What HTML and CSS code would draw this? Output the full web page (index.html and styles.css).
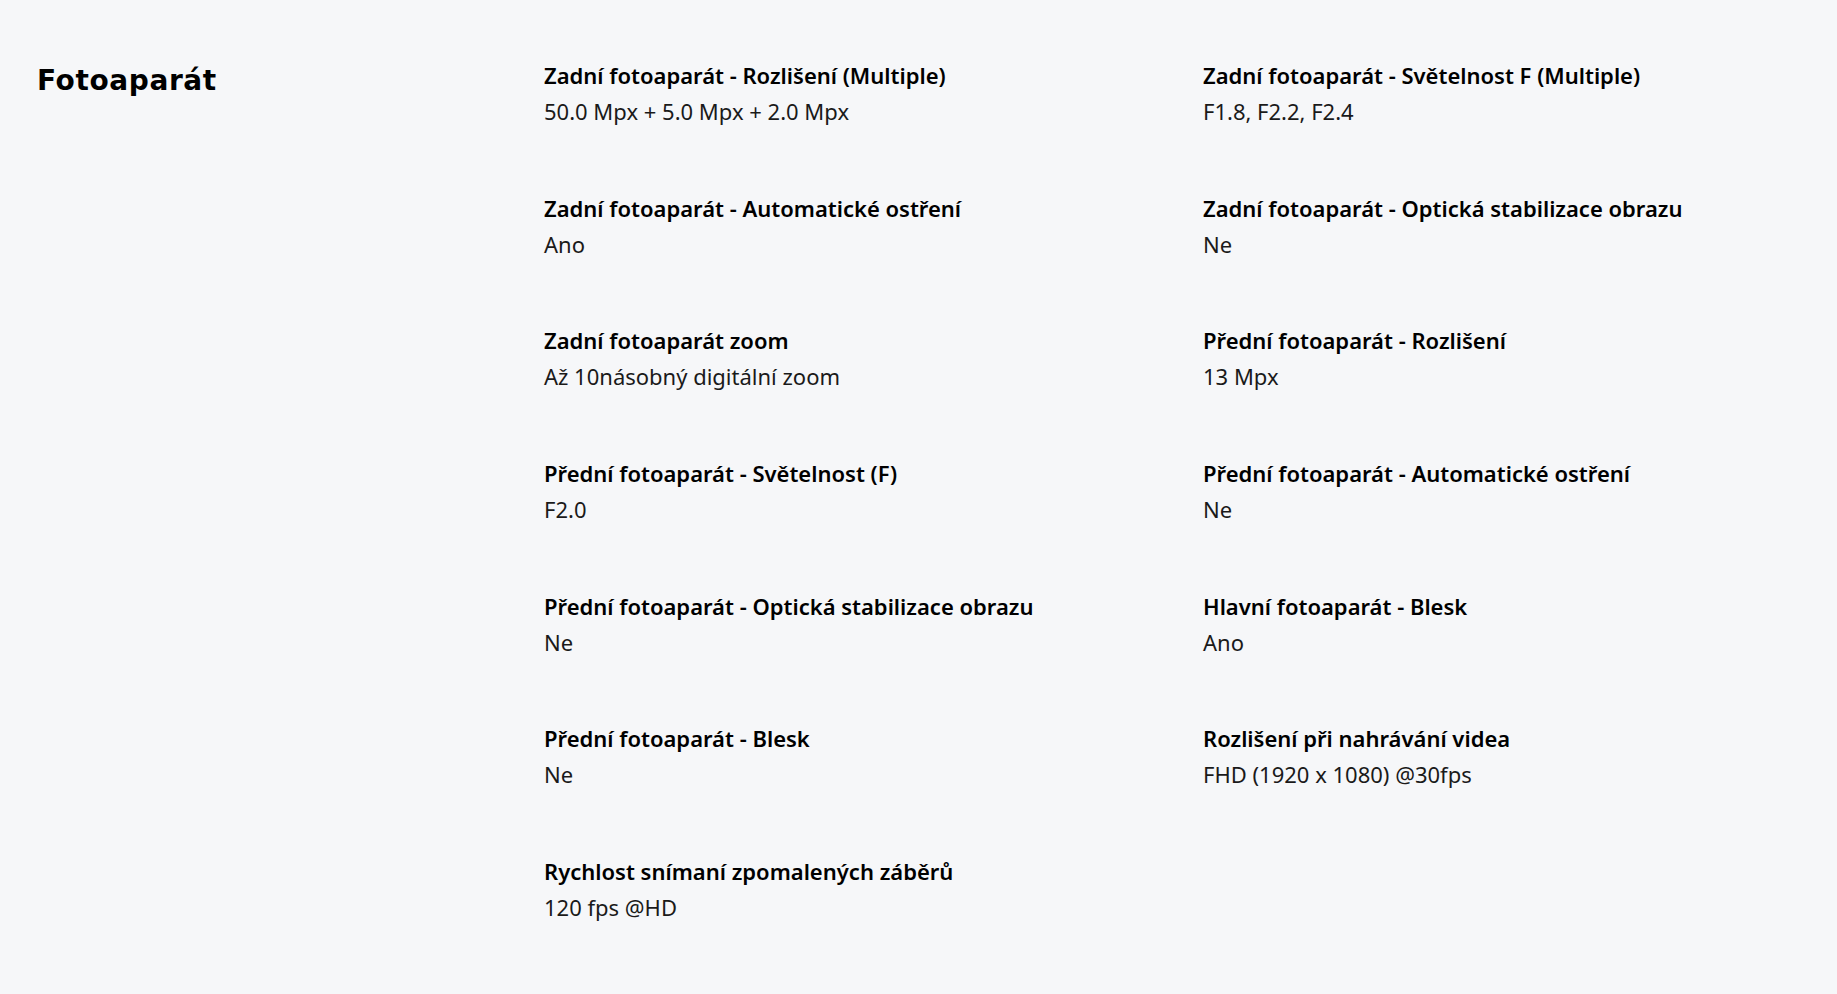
FILE: index.html
```html
<!DOCTYPE html>
<html lang="cs">
<head>
<meta charset="utf-8">
<title>Fotoaparát</title>
<link rel="stylesheet" href="styles.css">
</head>
<body>
<section class="spec">
  <h2 class="spec-title">Fotoaparát</h2>
  <div class="spec-grid">
    <div class="item"><div class="label">Zadní fotoaparát - Rozlišení (Multiple)</div><div class="value">50.0 Mpx + 5.0 Mpx + 2.0 Mpx</div></div>
    <div class="item"><div class="label">Zadní fotoaparát - Světelnost F (Multiple)</div><div class="value">F1.8, F2.2, F2.4</div></div>
    <div class="item"><div class="label">Zadní fotoaparát - Automatické ostření</div><div class="value">Ano</div></div>
    <div class="item"><div class="label">Zadní fotoaparát - Optická stabilizace obrazu</div><div class="value">Ne</div></div>
    <div class="item"><div class="label">Zadní fotoaparát zoom</div><div class="value">Až 10násobný digitální zoom</div></div>
    <div class="item"><div class="label">Přední fotoaparát - Rozlišení</div><div class="value">13 Mpx</div></div>
    <div class="item"><div class="label">Přední fotoaparát - Světelnost (F)</div><div class="value">F2.0</div></div>
    <div class="item"><div class="label">Přední fotoaparát - Automatické ostření</div><div class="value">Ne</div></div>
    <div class="item"><div class="label">Přední fotoaparát - Optická stabilizace obrazu</div><div class="value">Ne</div></div>
    <div class="item"><div class="label">Hlavní fotoaparát - Blesk</div><div class="value">Ano</div></div>
    <div class="item"><div class="label">Přední fotoaparát - Blesk</div><div class="value">Ne</div></div>
    <div class="item"><div class="label">Rozlišení při nahrávání videa</div><div class="value">FHD (1920 x 1080) @30fps</div></div>
    <div class="item"><div class="label">Rychlost snímaní zpomalených záběrů</div><div class="value">120 fps @HD</div></div>
  </div>
</section>
</body>
</html>
```

FILE: styles.css
```css
html, body {
  margin: 0;
  padding: 0;
  background: #f6f7f9;
}
body {
  font-family: "Noto Sans", "Open Sans", sans-serif;
  color: #000;
  min-height: 994px;
}
.spec {
  display: flex;
  padding: 60px 0 0 37px;
}
.spec-title {
  width: 507px;
  flex: none;
  margin: 6px 0 0;
  font-family: "DejaVu Sans", "Inter", sans-serif;
  font-weight: 700;
  font-size: 28px;
  line-height: 30px;
  letter-spacing: 0.6px;
  color: #000;
}
.spec-grid {
  display: grid;
  grid-template-columns: 659px 1fr;
  row-gap: 66.7px;
}
.label {
  font-weight: 600;
  font-size: 22px;
  line-height: 30px;
  color: #000;
}
.value {
  margin-top: 6px;
  font-size: 22px;
  line-height: 30px;
  color: #1a1a1a;
}
```
